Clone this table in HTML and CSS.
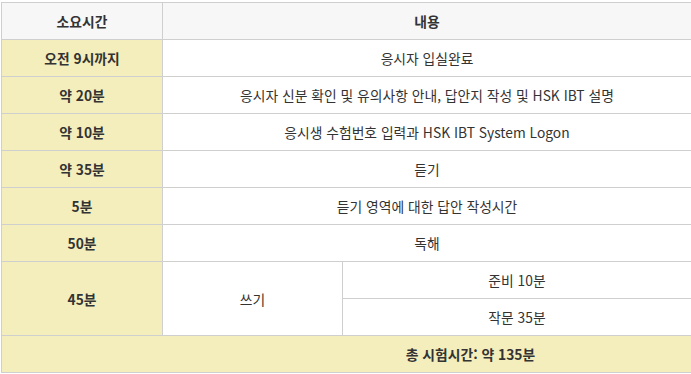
FILE: index.html
```html
<!DOCTYPE html>
<html lang="ko">
<head>
<meta charset="utf-8">
<title>시험 시간표</title>
<link rel="stylesheet" href="styles.css">
</head>
<body>
<div class="wrap">
  <table class="schedule">
    <colgroup>
      <col class="c-time">
      <col class="c-sub">
      <col>
    </colgroup>
    <thead>
      <tr>
        <th>소요시간</th>
        <th colspan="2">내용</th>
      </tr>
    </thead>
    <tbody>
      <tr><th class="time">오전 9시까지</th><td colspan="2">응시자 입실완료</td></tr>
      <tr><th class="time">약 20분</th><td colspan="2">응시자 신분 확인 및 유의사항 안내, 답안지 작성 및 HSK IBT 설명</td></tr>
      <tr><th class="time">약 10분</th><td colspan="2">응시생 수험번호 입력과 HSK IBT System Logon</td></tr>
      <tr><th class="time">약 35분</th><td colspan="2">듣기</td></tr>
      <tr><th class="time">5분</th><td colspan="2">듣기 영역에 대한 답안 작성시간</td></tr>
      <tr><th class="time">50분</th><td colspan="2">독해</td></tr>
      <tr><th class="time" rowspan="2">45분</th><td rowspan="2">쓰기</td><td>준비 10분</td></tr>
      <tr><td>작문 35분</td></tr>
    </tbody>
    <tfoot>
      <tr><td class="total" colspan="3">총 시험시간: 약 135분</td></tr>
    </tfoot>
  </table>
</div>
</body>
</html>
```

FILE: styles.css
```css
html, body {
  margin: 0;
  padding: 0;
  background: #fff;
}

.wrap {
  padding: 2px 0 0 1px;
  width: 691px;
  overflow: hidden;
}

.schedule {
  border-collapse: collapse;
  table-layout: fixed;
  width: 691px;
  font-family: "Noto Sans CJK KR", "Noto Sans", sans-serif;
  font-size: 13.8px;
  color: #333;
}

.schedule col.c-time { width: 161px; }
.schedule col.c-sub { width: 180px; }

.schedule th,
.schedule td {
  border: 1px solid #cfcfcf;
  height: 36px;
  padding: 0;
  text-align: center;
  vertical-align: middle;
  font-weight: 400;
  line-height: 18px;
}

.schedule thead th {
  background: #f7f7f7;
  font-weight: 700;
}

.schedule th.time {
  background: #f4eebd;
  font-weight: 700;
}

.schedule td.total {
  background: #f4eebd;
  font-weight: 700;
  padding-left: 248px;
}
```
